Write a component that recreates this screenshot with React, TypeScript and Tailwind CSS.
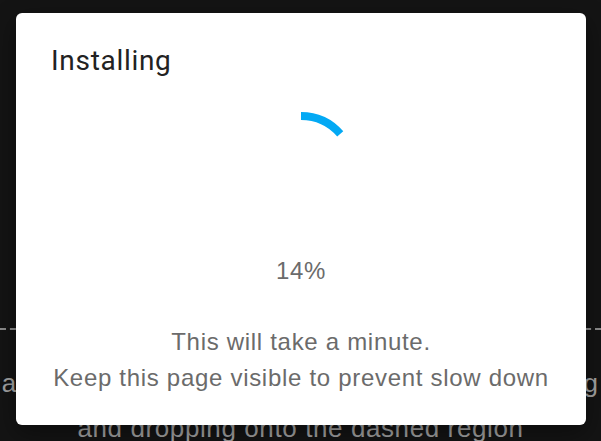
import React from "react"

function Spinner() {
  // arc from 12 o'clock to about 49deg clockwise
  return (
    <svg width="112" height="112" viewBox="0 0 112 112" className="block">
      <path
        d="M56 4 A52 52 0 0 1 95.24 21.89"
        fill="none"
        stroke="#03a9f4"
        strokeWidth="8"
      />
    </svg>
  )
}

export default function App() {
  return (
    <div className="relative w-[601px] h-[441px] overflow-hidden bg-[#141414] font-['Liberation_Sans',Arial,sans-serif]">
      {/* page behind the dialog */}
      <div className="flex flex-col items-center pt-[328px]">
        <div className="w-full border-t-2 border-dashed border-[#8c8c8c]" />
        <p className="mt-[33px] whitespace-nowrap text-[26px] leading-[40px] tracking-[1.25px] text-[#a3a3a3]">
          add a firmware file by clicking here or dragging
        </p>
        <p className="mt-[5px] whitespace-nowrap text-[26px] leading-[40px] tracking-[0.6px] text-[#a3a3a3]">
          and dropping onto the dashed region
        </p>
      </div>

      {/* dialog */}
      <div className="absolute left-[16px] top-[13px] w-[570px] h-[412px] rounded-[6px] bg-white shadow-[0_8px_24px_rgba(0,0,0,0.4)] flex flex-col">
        <h2 className="pt-8 px-[35px] font-['Roboto',sans-serif] text-[28px] leading-[32px] tracking-[0.7px] text-[#222]">
          Installing
        </h2>
        <div className="mt-[35px] flex justify-center">
          <Spinner />
        </div>
        <p className="mt-[29px] text-center text-[24px] leading-[36px] tracking-[0.7px] text-[#6b6b6b]">
          14%
        </p>
        <div className="mt-[35px] text-center text-[24px] leading-[36px] tracking-[0.7px] text-[#6b6b6b]">
          <p>This will take a minute.</p>
          <p>Keep this page visible to prevent slow down</p>
        </div>
      </div>
    </div>
  )
}
